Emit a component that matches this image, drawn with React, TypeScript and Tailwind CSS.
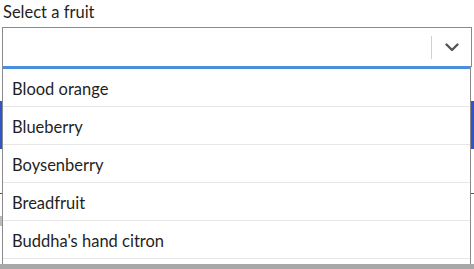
import React from "react";

const fruits = ["Blood orange", "Blueberry", "Boysenberry", "Breadfruit", "Buddha's hand citron"];

export default function App() {
  return (
    <div
      className="relative w-[474px] h-[269px] overflow-hidden bg-white text-[#1f1f1f]"
      style={{ fontFamily: "Lato, 'Noto Sans', sans-serif" }}
    >
      <div className="px-[3px] pt-[1px] text-[16.5px] leading-[22px]">Select a fruit</div>
      <div className="mx-[2px] mt-[4px] h-[40px] border border-[#8a8a8a] flex items-center justify-end">
        <div className="w-px h-[23px] bg-[#d0d0d0]" />
        <div className="w-[39px] flex items-center justify-center">
          <svg width="14" height="9" viewBox="0 0 14 9" fill="none">
            <path d="M1.5 1.5 L7 7 L12.5 1.5" stroke="#555" strokeWidth="2.4" strokeLinecap="round" strokeLinejoin="round" />
          </svg>
        </div>
      </div>
      {/* content underneath */}
      <div className="mt-[34px] h-[48px] bg-[#2f55c9]" />
      <div className="mt-[44px] h-px bg-[#555]" />
      <div className="mt-[22px] h-[10px] w-[4px] bg-[#bbb]" />
      <div className="absolute left-0 right-0 bottom-0 h-[5px] bg-[#a8a8a8]" />

      {/* dropdown menu */}
      <div className="absolute left-[2px] right-[3px] top-[66px] bottom-[5px] bg-white border-l border-r border-[#8a8a8a] overflow-hidden">
        <div className="h-[3px] bg-[#4a8ee0]" />
        {fruits.map((f) => (
          <div key={f} className="h-[38px] border-b border-[#e6e6e6] flex items-center pl-[9px] pt-[3px] text-[16.5px]">
            {f}
          </div>
        ))}
      </div>
    </div>
  );
}
